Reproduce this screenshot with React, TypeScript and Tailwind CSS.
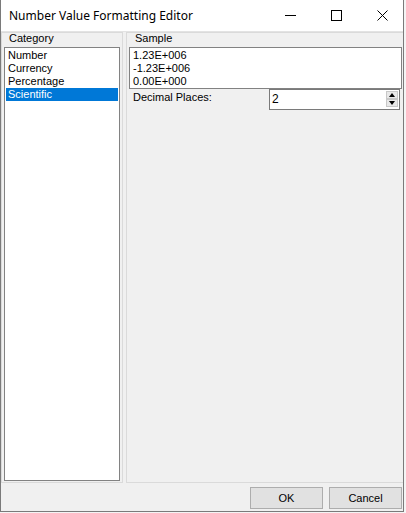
import React from "react";

const body = { fontFamily: '"Liberation Sans", Arial, sans-serif' };
const title = { fontFamily: '"Noto Sans", "Open Sans", sans-serif' };

export default function App() {
  const items = ["Number", "Currency", "Percentage", "Scientific"];
  return (
    <div className="w-[406px] h-[513px] bg-[#f4f4f4] overflow-hidden" style={body}>
      <div className="w-[404px] h-[512px] flex flex-col border-l border-r border-b border-[#7a7a7a] bg-[#f0f0f0]">
        {/* Title bar */}
        <div className="h-[31px] shrink-0 bg-white flex items-center">
          <span className="pl-[8px] text-[12px] text-black" style={title}>
            Number Value Formatting Editor
          </span>
          <div className="ml-auto flex h-full mr-[-2px]">
            <div className="w-[46px] h-full flex items-center justify-center">
              <svg width="11" height="11" viewBox="0 0 11 11">
                <line x1="0" y1="5.5" x2="11" y2="5.5" stroke="#000" strokeWidth="1" />
              </svg>
            </div>
            <div className="w-[46px] h-full flex items-center justify-center">
              <svg width="11" height="11" viewBox="0 0 11 11">
                <rect x="0.5" y="0.5" width="10" height="10" fill="none" stroke="#000" strokeWidth="1" />
              </svg>
            </div>
            <div className="w-[46px] h-full flex items-center justify-center">
              <svg width="11" height="11" viewBox="0 0 11 11">
                <path d="M0.5 0.5 L10.5 10.5 M10.5 0.5 L0.5 10.5" stroke="#000" strokeWidth="1" />
              </svg>
            </div>
          </div>
        </div>

        {/* Body */}
        <div className="flex-1 flex flex-col border-t border-[#e3e3e3]">
          <div className="h-[451px] flex gap-[3px] text-[11px] text-black">
            {/* Category panel */}
            <div className="w-[122px] flex flex-col border border-[#dadada] px-[2px] pb-[1px]">
              <div className="h-[14px] leading-[11px] pl-[5px]">Category</div>
              <div className="flex-1 border border-[#828282] bg-white pt-[1px] px-[1px]">
                {items.map((it) => (
                  <div
                    key={it}
                    className={
                      it === "Scientific"
                        ? "h-[13px] leading-[13px] pl-[2px] bg-[#0078d7] text-white"
                        : "h-[13px] leading-[13px] pl-[2px]"
                    }
                  >
                    {it}
                  </div>
                ))}
              </div>
            </div>

            {/* Sample panel */}
            <div className="flex-1 flex flex-col border-l border-t border-b border-[#dadada] pl-[2px] pr-[1px]">
              <div className="h-[14px] leading-[11px] pl-[6px]">Sample</div>
              <div className="h-[42px] border border-[#828282] bg-white pt-[1px] pl-[3px]">
                <div className="h-[13px] leading-[13px]">1.23E+006</div>
                <div className="h-[13px] leading-[13px]">-1.23E+006</div>
                <div className="h-[13px] leading-[13px]">0.00E+000</div>
              </div>
              <div className="flex">
                <div className="pl-[4px] pt-[2px] leading-[13px]">Decimal Places:</div>
                <div className="ml-auto mr-[2px] w-[131px] h-[21px] border border-[#7a7a7a] bg-white flex">
                  <div className="pl-[2px] text-[12px] leading-[19px]">2</div>
                  <div className="ml-auto mr-[1px] mt-[1px] flex flex-col gap-[0px]">
                    <div className="w-[12px] h-[8px] bg-[#e8e8e8] border border-[#c8c8c8] flex items-center justify-center">
                      <svg width="6" height="4" viewBox="0 0 6 4">
                        <path d="M3 0 L6 4 L0 4 Z" fill="#000" />
                      </svg>
                    </div>
                    <div className="w-[12px] h-[8px] bg-[#e8e8e8] border border-[#c8c8c8] flex items-center justify-center">
                      <svg width="6" height="4" viewBox="0 0 6 4">
                        <path d="M0 0 L6 0 L3 4 Z" fill="#000" />
                      </svg>
                    </div>
                  </div>
                </div>
              </div>
            </div>
          </div>

          {/* Buttons */}
          <div className="flex-1 flex justify-end items-start pt-[4px] gap-[6px] pr-[1px] text-[11px] text-black">
            <div className="w-[73px] h-[22px] bg-[#e1e1e1] border border-[#adadad] flex items-center justify-center">
              OK
            </div>
            <div className="w-[73px] h-[22px] bg-[#e1e1e1] border border-[#adadad] flex items-center justify-center">
              Cancel
            </div>
          </div>
        </div>
      </div>
    </div>
  );
}
